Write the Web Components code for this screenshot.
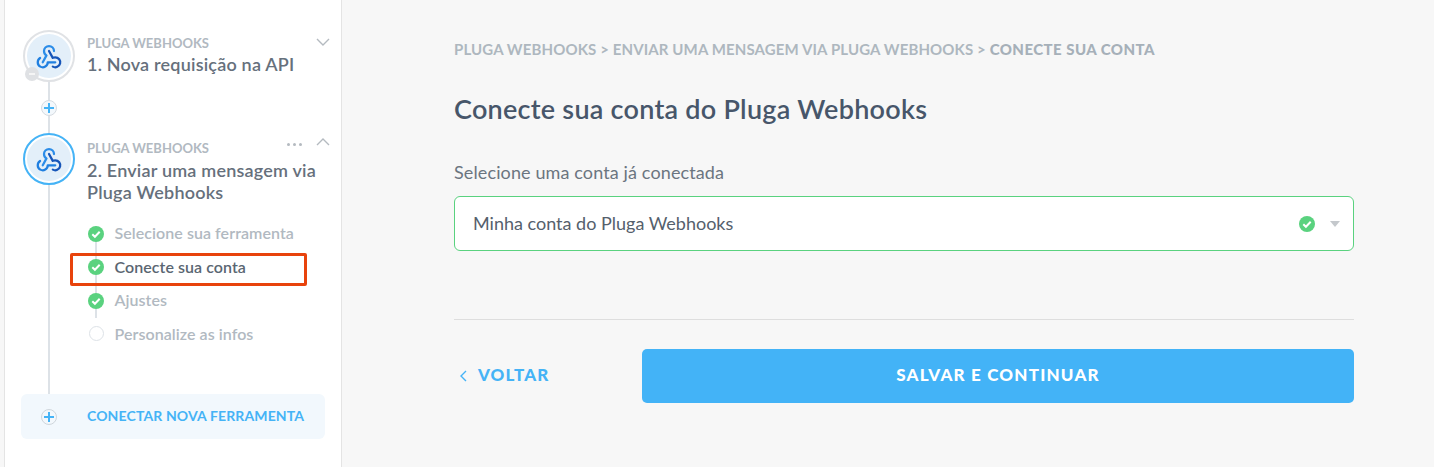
<!doctype html>
<html lang="pt">
<head>
<meta charset="utf-8">
<title>Pluga Webhooks</title>
<style>
  html, body { margin: 0; height: 100%; }
  body { font-family: Lato, "Liberation Sans", sans-serif; background: #f7f7f7; overflow: hidden; }
  pl-app { height: 467px; }
</style>
</head>
<body>
<pl-app>
  <pl-sidebar slot="side">
    <pl-step caption="PLUGA WEBHOOKS" heading="1. Nova requisição na API" state="done"></pl-step>
    <pl-add></pl-add>
    <pl-step caption="PLUGA WEBHOOKS" heading="2. Enviar uma mensagem via Pluga Webhooks" state="open">
      <pl-substep state="done">Selecione sua ferramenta</pl-substep>
      <pl-substep state="done" current>Conecte sua conta</pl-substep>
      <pl-substep state="done">Ajustes</pl-substep>
      <pl-substep>Personalize as infos</pl-substep>
    </pl-step>
    <pl-new-tool slot="footer">CONECTAR NOVA FERRAMENTA</pl-new-tool>
  </pl-sidebar>
  <pl-account-form></pl-account-form>
</pl-app>

<script>
// shared icon bits
const CHECK_ICON = (size) => `
  <svg width="${size}" height="${size}" viewBox="0 0 16 16" style="display:block">
    <circle cx="8" cy="8" r="8" fill="#5ad27f"/>
    <path d="M4.3 8.3l2.6 2.5 4.8-5" fill="none" stroke="#fff" stroke-width="2"/>
  </svg>`;

const PLUS_ICON = `
  <svg width="10" height="10" viewBox="0 0 10 10" style="display:block">
    <path d="M5 .5v9M.5 5h9" fill="none" stroke="#45b3f6" stroke-width="2" stroke-linecap="round"/>
  </svg>`;

const WEBHOOK_ICON = `
  <svg width="30" height="30" viewBox="0 0 24 24" fill="none" stroke-width="1.8" stroke-linecap="round" stroke-linejoin="round">
    <path stroke="#1f7fe0" d="M4.876 13.61a4 4 0 1 0 6.124 3.39h6"/>
    <path stroke="#1655b8" d="M15.066 20.502a4 4 0 1 0 1.934 -7.502c-.706 0 -1.424 .179 -2 .5l-3 -5.5"/>
    <path stroke="#2b8ce8" d="M16 8a4 4 0 1 0 -8 0c0 1.506 .77 2.818 2 3.5l-3 5.5"/>
  </svg>`;

class PlApp extends HTMLElement {
  constructor() {
    super();
    this.attachShadow({ mode: "open" }).innerHTML = `
      <style>
        :host { display: flex; align-items: stretch; }
      </style>
      <slot name="side"></slot>
      <slot></slot>`;
  }
}

class PlSidebar extends HTMLElement {
  constructor() {
    super();
    // the long line runs behind the step icons, down to the footer plus
    this.attachShadow({ mode: "open" }).innerHTML = `
      <style>
        :host {
          display: flex; flex-direction: column; box-sizing: border-box;
          flex: 0 0 338px; margin-left: 4px; padding: 30px 15px 28px 16px;
          background: #fff; border-left: 1px solid #e4e4e4; border-right: 1px solid #e4e4e4;
          position: relative; color: #66707c;
        }
        .line { position: absolute; left: 43px; top: 82px; height: 334px; width: 2px; background: #dde2e7; }
        .steps { position: relative; display: flex; flex-direction: column; flex: 1; }
        .foot { position: relative; }
      </style>
      <div class="line"></div>
      <div class="steps"><slot></slot></div>
      <div class="foot"><slot name="footer"></slot></div>`;
  }
}

class PlStep extends HTMLElement {
  constructor() {
    super();
    const open = this.getAttribute("state") === "open";
    this.attachShadow({ mode: "open" }).innerHTML = `
      <style>
        :host { display: block; }
        .head { display: flex; gap: 12px; }
        .ring {
          flex: none; box-sizing: border-box; width: 52px; height: 52px; border-radius: 50%;
          margin-left: 2px; background: #fff; position: relative;
          border: 2px solid ${open ? "#45b3f6" : "#e0e2e5"};
          display: flex; align-items: center; justify-content: center;
        }
        .disc {
          width: 44px; height: 44px; border-radius: 50%; background: #e3eff9;
          display: flex; align-items: center; justify-content: center;
        }
        .minus {
          position: absolute; left: 0px; top: 35px; width: 14px; height: 14px; border-radius: 50%;
          background: #dfe1e4; display: flex; align-items: center; justify-content: center;
        }
        .minus i { display: block; width: 6px; height: 2px; background: #f5f5f5; }
        .text { flex: 1; padding-top: ${open ? 8 : 6}px; min-width: 0; position: relative; }
        .cap { font-size: 13px; line-height: 15px; font-weight: 700; color: #b1b9c1; }
        .title { font-size: 18px; line-height: 22px; font-weight: 600; letter-spacing: .2px; color: #66707c; margin-top: ${open ? 3 : 2}px; }
        .tools { position: absolute; right: -4px; top: ${open ? 5 : 8}px; display: flex; align-items: center; gap: 14px; }
        .dots { display: flex; gap: 3px; margin-top: 4px; }
        .dots i { width: 3px; height: 3px; border-radius: 50%; background: #b4bac0; }
        .sub { display: flex; flex-direction: column; position: relative; margin: 13px 0 0 67px; }
        .sub::before { content: ""; position: absolute; left: 7px; top: 10px; height: 92px; width: 2px; background: #dde2e7; }
      </style>
      <div class="head">
        <div class="ring">
          <div class="disc">${WEBHOOK_ICON}</div>
          ${open ? "" : '<div class="minus"><i></i></div>'}
        </div>
        <div class="text">
          <div class="cap">${this.getAttribute("caption")}</div>
          <div class="title">${this.getAttribute("heading")}</div>
          <div class="tools">
            ${open ? '<div class="dots"><i></i><i></i><i></i></div>' : ""}
            <svg width="14" height="8" viewBox="0 0 14 8" fill="none" stroke="#b4bac0" stroke-width="1.4">
              <path d="${open ? "M1 7l6-6 6 6" : "M1 1l6 6 6-6"}"/>
            </svg>
          </div>
        </div>
      </div>
      ${open ? '<div class="sub"><slot></slot></div>' : ""}`;
  }
}

class PlAdd extends HTMLElement {
  constructor() {
    super();
    this.attachShadow({ mode: "open" }).innerHTML = `
      <style>
        :host {
          display: flex; box-sizing: border-box; width: 16px; height: 16px; margin: 18px 0 17px 20px;
          border: 1px solid #d5dbe1; border-radius: 50%; background: #f3f8fc;
          align-items: center; justify-content: center; position: relative;
        }
      </style>
      ${PLUS_ICON}`;
  }
}

class PlSubstep extends HTMLElement {
  constructor() {
    super();
    const done = this.getAttribute("state") === "done";
    const current = this.hasAttribute("current");
    this.attachShadow({ mode: "open" }).innerHTML = `
      <style>
        :host {
          display: flex; align-items: center; gap: 10.5px; height: 33.5px; position: relative;
          font-size: 16px; font-weight: 600; letter-spacing: .06px; color: ${current ? "#5a6672" : "#b1b9c1"};
        }
        .dot { flex: none; width: 16px; height: 16px; margin-top: 2px; }
        .empty { box-sizing: border-box; width: 15px; height: 15px; margin-left: .5px; border: 1px solid #dde2e7; border-radius: 50%; background: #fff; }
        .mark {
          position: absolute; left: -18px; top: 3px; width: 237px; height: 33px; box-sizing: border-box;
          border: 3px solid #e8430c; border-radius: 2px;
        }
      </style>
      <div class="dot">${done ? CHECK_ICON(16) : '<div class="empty"></div>'}</div>
      <span><slot></slot></span>
      ${current ? '<div class="mark"></div>' : ""}`;
  }
}

class PlNewTool extends HTMLElement {
  constructor() {
    super();
    this.attachShadow({ mode: "open" }).innerHTML = `
      <style>
        :host {
          display: flex; align-items: center; box-sizing: border-box; height: 45px; width: 304px;
          background: #f2f8fd; border-radius: 6px; padding-left: 20px;
          font-size: 14px; font-weight: 700; letter-spacing: .13px; color: #45b3f6;
        }
        span { padding-bottom: 2px; }
        .plus {
          flex: none; box-sizing: border-box; width: 16px; height: 16px; margin-right: 30px;
          border: 1px solid #cfd6dc; border-radius: 50%; background: #f3f8fc;
          display: flex; align-items: center; justify-content: center;
        }
      </style>
      <div class="plus">${PLUS_ICON}</div>
      <span><slot></slot></span>`;
  }
}

class PlAccountForm extends HTMLElement {
  constructor() {
    super();
    this.attachShadow({ mode: "open" }).innerHTML = `
      <style>
        :host { display: flex; flex-direction: column; flex: 1; padding: 40px 80px 0 112px; color: #47566a; }
        .crumbs { font-size: 15px; line-height: 18px; font-weight: 700; letter-spacing: .12px; color: #aeb7bf; }
        .crumbs b { font-weight: 900; letter-spacing: .45px; color: #a6b0b9; }
        h1 { margin: 35px 0 0; font-size: 27px; line-height: 32px; font-weight: 600; letter-spacing: .25px; color: #47566a; }
        .label { margin-top: 37px; font-size: 18px; line-height: 20px; letter-spacing: .12px; color: #6b7580; }
        .select {
          margin-top: 14px; height: 55px; box-sizing: border-box; display: flex; align-items: center;
          padding: 0 13px 0 18px; background: #fff; border: 1px solid #5ad27f; border-radius: 6px;
          font-size: 18px; color: #55606c;
        }
        .select span { flex: 1; padding-bottom: 2px; }
        .caret { width: 0; height: 0; margin-left: 15px; border: 5px solid transparent; border-top: 6px solid #c4c8cc; border-bottom: 0; }
        hr { margin: 68px 0 0; border: 0; border-top: 1px solid #dedede; }
        .actions { display: flex; align-items: center; margin-top: 29px; }
        .back {
          flex: 0 0 188px; display: flex; align-items: center; gap: 11px; padding-left: 5px; box-sizing: border-box;
          font-size: 17px; font-weight: 900; letter-spacing: 1.1px; color: #45b3f6;
        }
        .back span { padding-bottom: 3px; }
        .save {
          flex: 1; height: 54px; box-sizing: border-box; padding-bottom: 3px; display: flex; align-items: center; justify-content: center;
          background: #43b3f7; border-radius: 5px; color: #fff;
          font-size: 17px; font-weight: 900; letter-spacing: 1.2px;
        }
      </style>
      <div class="crumbs">PLUGA WEBHOOKS &gt; ENVIAR UMA MENSAGEM VIA PLUGA WEBHOOKS &gt; <b>CONECTE SUA CONTA</b></div>
      <h1>Conecte sua conta do Pluga Webhooks</h1>
      <div class="label">Selecione uma conta já conectada</div>
      <div class="select">
        <span>Minha conta do Pluga Webhooks</span>
        ${CHECK_ICON(16)}
        <div class="caret"></div>
      </div>
      <hr>
      <div class="actions">
        <div class="back">
          <svg width="8" height="12" viewBox="0 0 8 12" fill="none" stroke="#45b3f6" stroke-width="1.4"><path d="M7 1L2 6l5 5"/></svg>
          <span>VOLTAR</span>
        </div>
        <div class="save">SALVAR E CONTINUAR</div>
      </div>`;
  }
}

customElements.define("pl-app", PlApp);
customElements.define("pl-sidebar", PlSidebar);
customElements.define("pl-step", PlStep);
customElements.define("pl-add", PlAdd);
customElements.define("pl-substep", PlSubstep);
customElements.define("pl-new-tool", PlNewTool);
customElements.define("pl-account-form", PlAccountForm);
</script>
</body>
</html>
